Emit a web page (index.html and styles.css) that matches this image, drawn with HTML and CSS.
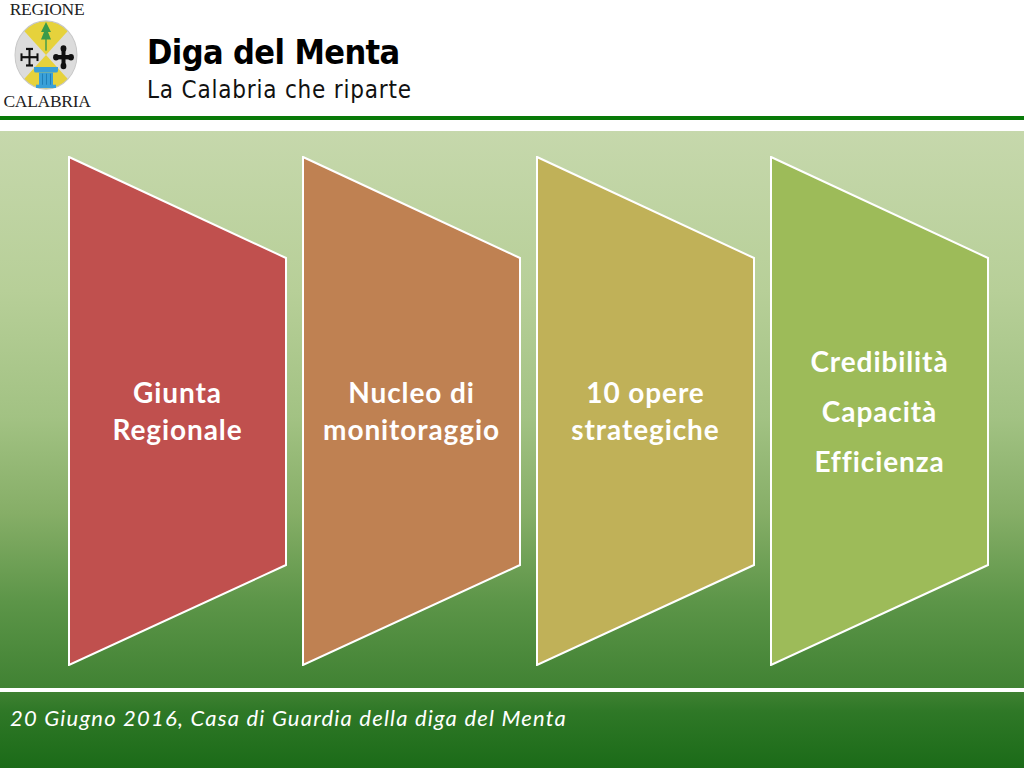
FILE: index.html
```html
<!DOCTYPE html>
<html lang="it">
<head>
<meta charset="utf-8">
<title>Diga del Menta</title>
<link rel="stylesheet" href="styles.css">
</head>
<body>
<div class="slide">
  <header class="header">
    <div class="logo">
      <div class="logo-text">REGIONE</div>
      <svg class="emblem" width="66" height="70" viewBox="0 0 66 70">
        <defs>
          <clipPath id="c"><circle cx="33" cy="35" r="31"/></clipPath>
        </defs>
        <g transform="translate(0,-3.5) scale(1,1.1)">
          <g clip-path="url(#c)">
            <rect x="0" y="0" width="66" height="70" fill="#dcdcdc"/>
            <polygon points="33,35 -2,0 68,0" fill="#e6d23c"/>
            <polygon points="33,35 -2,70 68,70" fill="#e6d23c"/>
          </g>
          <circle cx="33" cy="35" r="31" fill="none" stroke="#c8c8c8" stroke-width="1"/>
          <!-- tree -->
          <polygon points="33,5 28,14 31,14 28,21 38,21 35,14 38,14" fill="#3a9a4a"/>
          <rect x="32.3" y="20" width="1.4" height="11" fill="#3a9a4a"/>
          <!-- left cross potent -->
          <g fill="#111" transform="translate(-4,0)">
            <rect x="12" y="36" width="17" height="2"/>
            <rect x="19.5" y="29" width="2" height="16"/>
            <rect x="11.5" y="33.5" width="2" height="7"/>
            <rect x="27.5" y="33.5" width="2" height="7"/>
            <rect x="17" y="28.5" width="7" height="2"/>
            <rect x="17" y="43.5" width="7" height="2"/>
          </g>
          <!-- right cross bottony -->
          <g fill="#111" transform="translate(5,0)">
            <rect x="37" y="35" width="17" height="4"/>
            <rect x="43.5" y="28" width="4" height="18"/>
            <circle cx="45.5" cy="29" r="2.9"/>
            <circle cx="45.5" cy="45" r="2.9"/>
            <circle cx="38" cy="37" r="2.9"/>
            <circle cx="53" cy="37" r="2.9"/>
          </g>
          <!-- column -->
          <g fill="#3aa0d8">
            <path d="M21,46 h24 v3 q0,2 -2,2 h-20 q-2,0 -2,-2z"/>
            <rect x="26" y="51" width="14" height="12"/>
            <rect x="23" y="62" width="20" height="3"/>
          </g>
          <g fill="#1f7fb8">
            <rect x="29" y="52" width="1" height="10"/>
            <rect x="33" y="52" width="1" height="10"/>
            <rect x="37" y="52" width="1" height="10"/>
          </g>
        </g>
      </svg>
      <div class="logo-text">CALABRIA</div>
    </div>
    <div class="titles">
      <h1 class="title">Diga del Menta</h1>
      <p class="subtitle">La Calabria che riparte</p>
    </div>
  </header>
  <div class="rule"></div>
  <main class="stage">
    <div class="steps">
      <div class="step">
        <svg class="shape" viewBox="0 0 219 510" preserveAspectRatio="none"><polygon points="1,1 218,102 218,409 1,509" fill="#c0504e" stroke="#fff" stroke-width="2"/></svg>
        <div class="label"><p>Giunta<br>Regionale</p></div>
      </div>
      <div class="step">
        <svg class="shape" viewBox="0 0 219 510" preserveAspectRatio="none"><polygon points="1,1 218,102 218,409 1,509" fill="#bf8152" stroke="#fff" stroke-width="2"/></svg>
        <div class="label"><p>Nucleo di<br>monitoraggio</p></div>
      </div>
      <div class="step">
        <svg class="shape" viewBox="0 0 219 510" preserveAspectRatio="none"><polygon points="1,1 218,102 218,409 1,509" fill="#c0b158" stroke="#fff" stroke-width="2"/></svg>
        <div class="label"><p>10 opere<br>strategiche</p></div>
      </div>
      <div class="step">
        <svg class="shape" viewBox="0 0 219 510" preserveAspectRatio="none"><polygon points="1,1 218,102 218,409 1,509" fill="#9dbb59" stroke="#fff" stroke-width="2"/></svg>
        <div class="label list"><p>Credibilità</p><p>Capacità</p><p>Efficienza</p></div>
      </div>
    </div>
    <div class="footline"></div>
    <footer class="footer">20 Giugno 2016, Casa di Guardia della diga del Menta</footer>
  </main>
</div>
</body>
</html>
```

FILE: styles.css
```css
html, body {
  margin: 0;
  padding: 0;
}
body {
  width: 1024px;
  height: 768px;
  overflow: hidden;
  background: #fff;
}
.slide {
  width: 1024px;
  height: 768px;
  display: flex;
  flex-direction: column;
}
.header {
  height: 116px;
  display: flex;
  align-items: flex-start;
  background: #fff;
}
.logo {
  width: 94px;
  display: flex;
  flex-direction: column;
  align-items: center;
}
.logo-text {
  font-family: "Liberation Serif", "Times New Roman", serif;
  font-size: 17.5px;
  line-height: 19px;
  color: #222;
  letter-spacing: -0.3px;
}
.emblem {
  display: block;
  margin: 1px 0 2px -2px;
}
.titles {
  margin-left: 53px;
  padding-top: 32px;
}
.title {
  margin: 0;
  font-family: "DejaVu Sans Condensed", "DejaVu Sans", sans-serif;
  font-weight: bold;
  font-size: 34px;
  line-height: 40px;
  color: #000;
  letter-spacing: -0.6px;
}
.subtitle {
  margin: 4px 0 0;
  font-family: "DejaVu Sans Condensed", "DejaVu Sans", sans-serif;
  font-size: 24px;
  line-height: 28px;
  color: #111;
  letter-spacing: 0.8px;
}
.rule {
  height: 4px;
  background: #087a08;
  margin-bottom: 11px;
}
.stage {
  flex: 1;
  display: flex;
  flex-direction: column;
  background: linear-gradient(to bottom, #c6d8ac 0%, #b7cf98 25%, #a2c283 45%, #86ae67 60%, #5c9548 74%, #3f8132 88%, #2f7827 91%, #1b6b18 100%);
}
.steps {
  display: flex;
  gap: 15px;
  padding: 25px 0 0 68px;
  height: 510px;
}
.step {
  position: relative;
  width: 219px;
  height: 510px;
  display: flex;
  align-items: center;
  justify-content: center;
}
.shape {
  position: absolute;
  left: 0;
  top: 0;
  width: 219px;
  height: 510px;
}
.label {
  position: relative;
  width: 219px;
  text-align: center;
  font-family: Lato, "Liberation Sans", sans-serif;
  font-weight: bold;
  font-size: 28px;
  line-height: 37px;
  letter-spacing: 0.9px;
  color: #fff;
}
.label p {
  margin: 0;
}
.label.list p {
  line-height: 50px;
}
.footline {
  height: 4px;
  background: #fff;
  margin-top: 22px;
}
.footer {
  padding: 13px 0 0 10px;
  font-family: Lato, "Liberation Sans", sans-serif;
  font-style: italic;
  font-size: 22px;
  line-height: 26px;
  letter-spacing: 1.2px;
  color: #fff;
}
```
